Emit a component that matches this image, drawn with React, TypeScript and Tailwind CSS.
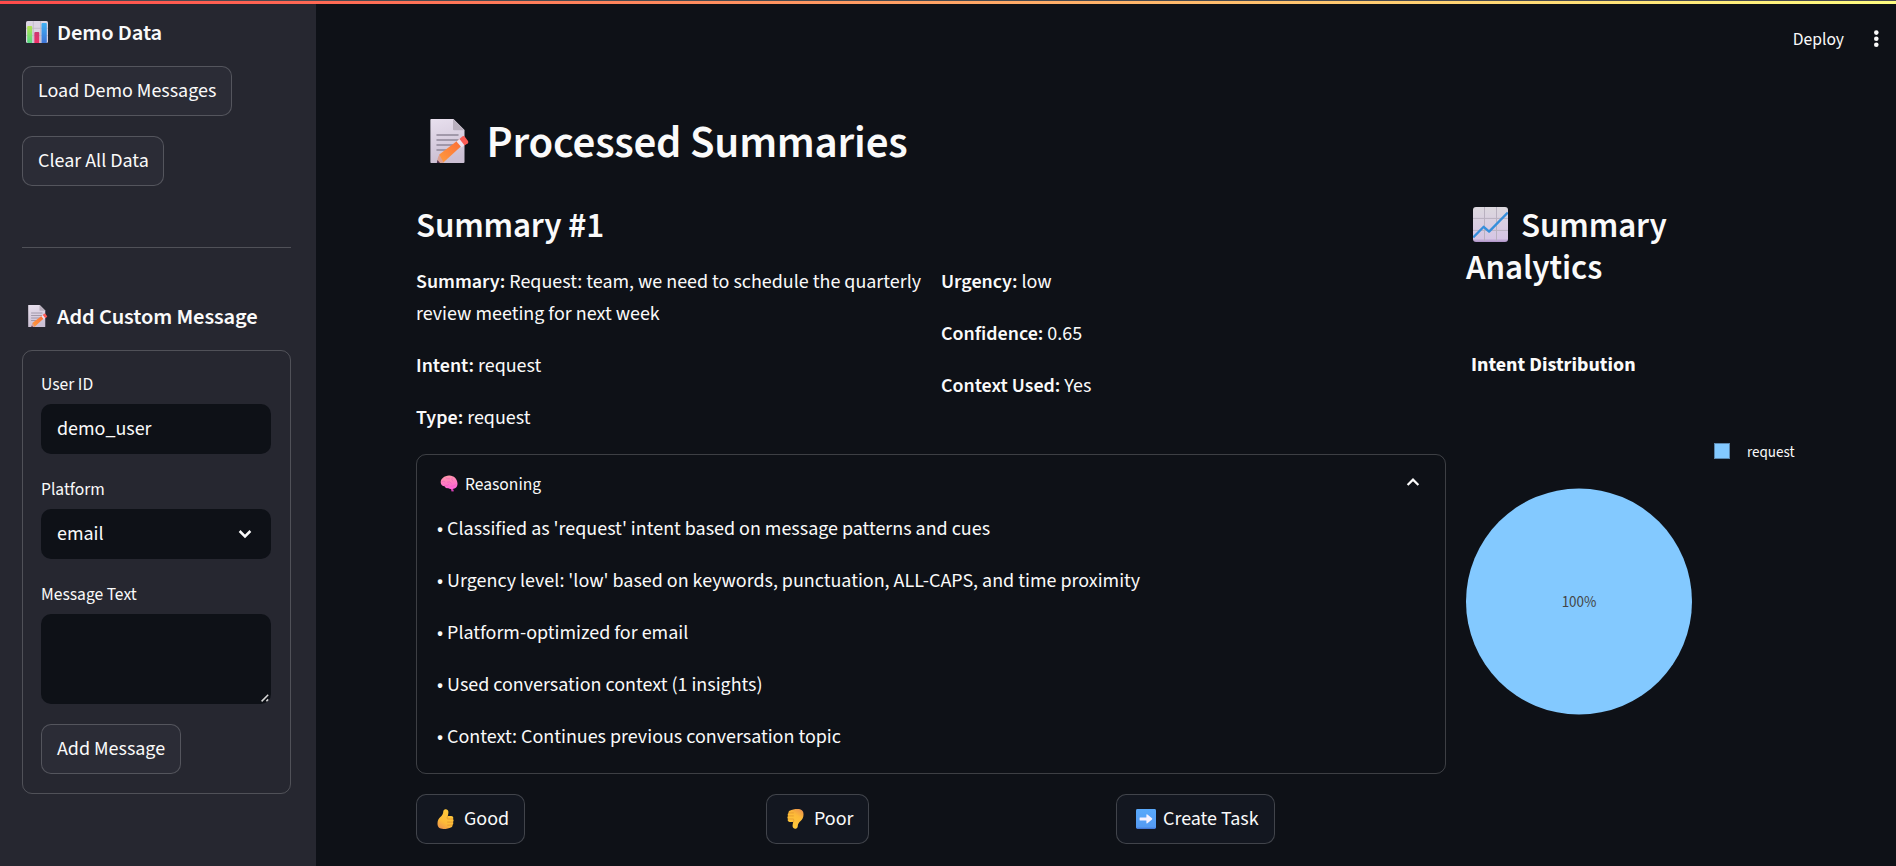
import type { ReactNode } from "react";

function MemoIcon({ className }: { className: string }) {
  return (
    <svg viewBox="0 0 40 44" className={className}>
      <defs>
        <linearGradient id="memoPaper" x1="0" y1="0" x2="0.2" y2="1">
          <stop offset="0" stopColor="#e8e0ee" />
          <stop offset="1" stopColor="#cbbfd3" />
        </linearGradient>
        <linearGradient id="memoPencil" x1="1" y1="0" x2="0" y2="1">
          <stop offset="0" stopColor="#fb6a36" />
          <stop offset="1" stopColor="#ff9f3f" />
        </linearGradient>
      </defs>
      <path d="M1 0H23.5L34.5 11V43Q34.5 44 33.5 44H1Q0.4 44 0.4 43V1Q0.4 0 1 0Z" fill="url(#memoPaper)" />
      <path d="M23 0L34.5 11.3H24Q23 11.3 23 10.3Z" fill="#b9b0be" />
      <path d="M7 16H28M7 21H28M7 26H23M7 31H17" stroke="#8f8798" strokeWidth="1.5" strokeLinecap="round" />
      <path d="M9.3 35.5L29 20.5L33 25.5L13.4 43.5L7.5 44Z" fill="url(#memoPencil)" />
      <path d="M9.3 35.5L13.6 43.4L12.5 44H7L7.7 39.5Z" fill="#dba093" />
      <path d="M7.5 41L10 44H6.8Z" fill="#50304f" />
      <path d="M26.5 22.5L30 19.7L35 25.4L31.6 28.4Z" fill="#ebe3f2" />
      <path d="M29.5 20L32.2 17.5Q33.7 16.4 35 18L38 22Q38.8 23.2 37.8 24.2L34.6 26.5Z" fill="#fb5c55" />
    </svg>
  );
}

function BarChartIcon({ className }: { className: string }) {
  return (
    <svg viewBox="0 0 22 22" className={className}>
      <defs>
        <linearGradient id="barGreen" x1="0" y1="0" x2="0" y2="1">
          <stop offset="0" stopColor="#b3e34f" />
          <stop offset="1" stopColor="#54d983" />
        </linearGradient>
        <linearGradient id="barRed" x1="0" y1="0" x2="0" y2="1">
          <stop offset="0" stopColor="#c93a73" />
          <stop offset="1" stopColor="#f02f66" />
        </linearGradient>
        <linearGradient id="barBlue" x1="0" y1="0" x2="0" y2="1">
          <stop offset="0" stopColor="#3fb0f3" />
          <stop offset="1" stopColor="#3f75d6" />
        </linearGradient>
      </defs>
      <rect width="22" height="22" rx="1.6" fill="#dcd4e2" />
      <path d="M7.3 0V22M14.6 0V22M0 7.3H22M0 14.6H22" stroke="#bfb7c6" strokeWidth="0.8" />
      <path d="M1.2 22V6Q1.2 5 2.2 5H5.2Q6.2 5 6.2 6V22H2.2Q1.2 22 1.2 21Z" fill="url(#barGreen)" />
      <path d="M8.3 22V12Q8.3 11 9.3 11H12.3Q13.3 11 13.3 12V22Z" fill="url(#barRed)" />
      <path d="M15.5 22V3Q15.5 2 16.5 2H19.8Q20.8 2 20.8 3V22Z" fill="url(#barBlue)" />
    </svg>
  );
}

function TrendIcon({ className }: { className: string }) {
  return (
    <svg viewBox="0 0 35 35" className={className}>
      <defs>
        <linearGradient id="trendPaper" x1="0" y1="0" x2="0" y2="1">
          <stop offset="0" stopColor="#dcd8de" />
          <stop offset="0.9" stopColor="#d6c6e4" />
          <stop offset="1" stopColor="#ac90c6" />
        </linearGradient>
      </defs>
      <rect width="35" height="35" rx="3" fill="url(#trendPaper)" />
      <path d="M11.5 0V34M23.5 0V34M0 11.4H35M0 23.4H35" stroke="#b9b1c0" strokeWidth="1" />
      <path d="M0.2 30.5L10.7 19.8L16.1 24.6L34.8 5.6" fill="none" stroke="#368fdb" strokeWidth="2.3" strokeLinejoin="round" />
    </svg>
  );
}

function BrainIcon({ className }: { className: string }) {
  return (
    <svg viewBox="0 0 18 17" className={className}>
      <defs>
        <linearGradient id="brainPink" x1="0.3" y1="0" x2="0.5" y2="1">
          <stop offset="0" stopColor="#ff9aa8" />
          <stop offset="1" stopColor="#ff63d8" />
        </linearGradient>
      </defs>
      <path d="M12.2 12L14 16.2L11.6 16.6L10.5 13Z" fill="#d63fb5" />
      <path d="M9 .6C13.5 .3 17.4 4 17.5 8.6C17.5 12 15.5 14 12.5 14C10.5 14.2 9 13.6 8 12.9C6.5 13.6 5 12.6 4.6 11.2C2.5 11.2 .8 10 .7 7.6C.6 3.8 4.3 .9 9 .6Z" fill="url(#brainPink)" />
      <path d="M2 6.5Q4 5.5 5 6.8M6 2.8Q7.2 4.2 9.5 3.8M12 3Q11 5 12.8 6.2M7.5 7Q10 6 11.5 8.5M4.8 10.6Q7.5 11.2 9 9.2M11 11.3Q13.5 11.5 15.8 9.8" fill="none" stroke="#e860bc" strokeWidth="0.6" strokeLinecap="round" />
    </svg>
  );
}

function ThumbIcon({ className }: { className: string }) {
  return (
    <svg viewBox="0 0 17 20" className={className}>
      <defs>
        <linearGradient id="thumbGold" x1="0.7" y1="0" x2="0.2" y2="1">
          <stop offset="0" stopColor="#ffcb3b" />
          <stop offset="0.65" stopColor="#fdba38" />
          <stop offset="1" stopColor="#ec944c" />
        </linearGradient>
      </defs>
      <path d="M7.6 .5C9.6 -.3 11.2 .9 11.4 2.8C11.5 4.5 11 6 10.8 7H14.2C16 7 16.8 8.6 16 10C16.8 11 16.8 12.2 16 13.1C16.6 14.2 16.3 15.4 15.4 16C15.7 17.2 15 18.2 13.8 18.4C12.6 19.3 9.4 19.9 6.4 19.9C2.8 19.9 .5 18.4 .5 14.8C.4 11.5 1.5 9.5 3.4 7.9C5 6.5 6 5.1 6.2 3.2C6.3 1.9 6.6 .9 7.6 .5Z" fill="url(#thumbGold)" />
      <path d="M10.8 10H15.6M10.6 13.1H15.6M10.6 16.1H15M10.6 7.3Q9.8 8.4 10.2 9.4" fill="none" stroke="#de8f2e" strokeWidth="0.7" strokeLinecap="round" />
    </svg>
  );
}

function ArrowBadgeIcon({ className }: { className: string }) {
  return (
    <svg viewBox="0 0 20 20" className={className}>
      <defs>
        <linearGradient id="arrowBlue" x1="0" y1="0" x2="0" y2="1">
          <stop offset="0" stopColor="#59a9fb" />
          <stop offset="0.9" stopColor="#559bf2" />
          <stop offset="1" stopColor="#3f6fd0" />
        </linearGradient>
      </defs>
      <rect width="20" height="20" rx="1.4" fill="url(#arrowBlue)" />
      <path d="M4 8.4H10.4V6Q10.4 4.8 11.4 5.6L16 9.3Q16.6 9.9 16 10.5L11.4 14.2Q10.4 15 10.4 13.8V11.4H4Q3.6 11.4 3.6 11V8.8Q3.6 8.4 4 8.4Z" fill="#f7f2ff" />
    </svg>
  );
}

function Button({ children, className }: { children: ReactNode; className: string }) {
  return (
    <button className={`flex h-[50px] items-center rounded-[10px] border border-[#fafafa]/20 text-xl leading-8 ${className}`}>
      {children}
    </button>
  );
}

function Label({ children }: { children: ReactNode }) {
  return <label className="block h-[34px] pt-px text-[17.5px] leading-[28px]">{children}</label>;
}

function Field({ name, value }: { name: string; value: string }) {
  return (
    <p>
      <strong className="font-semibold">{name}:</strong>
      {` ${value}`}
    </p>
  );
}

const reasons = [
  "• Classified as 'request' intent based on message patterns and cues",
  "• Urgency level: 'low' based on keywords, punctuation, ALL-CAPS, and time proximity",
  "• Platform-optimized for email",
  "• Used conversation context (1 insights)",
  "• Context: Continues previous conversation topic",
];

function Sidebar() {
  return (
    <aside className="h-full w-[316px] shrink-0 bg-[#262730] pr-[25px] pl-[22px]">
      <h3 className="flex h-[62px] items-start pt-[15px] text-[22.5px] leading-[27px] font-semibold tracking-[-0.1px]">
        <BarChartIcon className="mt-[2px] mr-[9px] ml-1 size-[22px]" />
        <span className="pt-px">Demo Data</span>
      </h3>
      <div className="flex flex-col items-start gap-5">
        <Button className="bg-[#2b2c36] px-[15px]">Load Demo Messages</Button>
        <Button className="bg-[#2b2c36] pr-[14px] pl-[15px]">Clear All Data</Button>
      </div>
      <hr className="mt-[61px] border-[#fafafa]/20" />
      <h3 className="mt-[50px] flex h-[52px] items-start text-[22.5px] leading-[27px] font-semibold tracking-[-0.1px]">
        <MemoIcon className="mt-[7px] mr-[9px] ml-[6px] h-[22px] w-5" />
        <span className="mt-[6px]">Add Custom Message</span>
      </h3>
      <form className="flex h-[444px] flex-col items-start rounded-[10px] border border-[#fafafa]/20 pt-[19px] pr-[19px] pl-[18px]">
        <Label>User ID</Label>
        <input
          readOnly
          value="demo_user"
          className="h-[50px] w-full rounded-[10px] bg-[#0e1117] px-4 text-xl outline-none"
        />
        <div className="h-[21px]" />
        <Label>Platform</Label>
        <div className="flex h-[50px] w-full items-center justify-between rounded-[10px] bg-[#0e1117] pr-[19px] pl-4 text-xl">
          email
          <svg viewBox="0 0 14 10" className="h-[10px] w-[14px]">
            <path d="M1.6 2L7 7.4L12.4 2" fill="none" stroke="#fafafa" strokeWidth="2.5" />
          </svg>
        </div>
        <div className="h-[21px]" />
        <Label>Message Text</Label>
        <div className="flex h-[90px] w-full items-end justify-end rounded-[10px] bg-[#0e1117] p-[2px]">
          <svg viewBox="0 0 8 8" className="size-2">
            <path d="M0.6 7.4L7.2 0.8M5.4 7.2L7.2 5.4" fill="none" stroke="#d8d8d8" strokeWidth="1.5" />
          </svg>
        </div>
        <Button className="mt-5 bg-[#2b2c36] px-[15px]">Add Message</Button>
      </form>
    </aside>
  );
}

function Summary() {
  return (
    <section className="w-[1030px]">
      <h3 className="h-[61px] text-[35px] leading-[42px] font-semibold tracking-[-0.15px]">Summary #1</h3>
      <div className="flex h-[188px] gap-[15px] text-xl leading-8">
        <div className="flex w-[510px] flex-col gap-5">
          <Field name="Summary" value="Request: team, we need to schedule the quarterly review meeting for next week" />
          <Field name="Intent" value="request" />
          <Field name="Type" value="request" />
        </div>
        <div className="flex w-[505px] flex-col gap-5">
          <Field name="Urgency" value="low" />
          <Field name="Confidence" value="0.65" />
          <Field name="Context Used" value="Yes" />
        </div>
      </div>
      <div className="h-[320px] rounded-[10px] border border-[#fafafa]/20 px-5">
        <div className="flex h-[58px] items-center pr-[5px] text-[17.5px] leading-7">
          <BrainIcon className="mr-[7px] mb-px ml-[3px] h-[17px] w-[18px]" />
          <span className="grow pt-px">Reasoning</span>
          <svg viewBox="0 0 14 10" className="mb-[4px] h-[10px] w-[14px]">
            <path d="M1.6 8L7 2.6L12.4 8" fill="none" stroke="#fafafa" strokeWidth="2.2" />
          </svg>
        </div>
        <div className="flex flex-col gap-5 text-xl leading-8">
          {reasons.map((reason) => (
            <p key={reason}>{reason}</p>
          ))}
        </div>
      </div>
      <div className="mt-5 grid grid-cols-3 gap-5">
        <div className="flex">
          <Button className="bg-[#131720] pr-[15px] pl-5">
            <ThumbIcon className="mr-[10px] h-5 w-[17px]" />
            Good
          </Button>
        </div>
        <div className="flex">
          <Button className="bg-[#131720] pr-[15px] pl-5">
            <ThumbIcon className="mr-[10px] h-5 w-[17px] rotate-180" />
            Poor
          </Button>
        </div>
        <div className="flex">
          <Button className="bg-[#131720] pr-[15px] pl-[19px]">
            <ArrowBadgeIcon className="mr-[7px] size-5" />
            Create Task
          </Button>
        </div>
      </div>
    </section>
  );
}

function Analytics() {
  return (
    <section className="w-[330px]">
      <h3 className="text-[35px] leading-[42px] font-semibold tracking-[-0.1px]">
        <span className="flex">
          <TrendIcon className="mt-[2px] mr-[13px] ml-[7px] size-[35px]" />
          Summary
        </span>
        Analytics
      </h3>
      <svg viewBox="0 0 330 440" className="mt-[51px] h-[440px] w-[330px]">
        <text x="5" y="31" fontSize="20" fontWeight="700" fill="#fafafa">
          Intent Distribution
        </text>
        <rect x="248.5" y="103.5" width="15" height="15" fill="#83c9ff" stroke="#5a86ad" />
        <text x="281" y="117" fontSize="15" fill="#fafafa">
          request
        </text>
        <circle cx="113" cy="261.5" r="113" fill="#83c9ff" />
        <text x="113" y="267" fontSize="15" textAnchor="middle" fill="#444444">
          100%
        </text>
      </svg>
    </section>
  );
}

export default function App() {
  return (
    <div className="flex h-[866px] w-[1896px] flex-col overflow-hidden bg-[#0e1117] font-['Source_Sans_Pro','Source_Sans_3','Noto_Sans_CJK_SC',sans-serif] text-[#fafafa]">
      <div className="h-px shrink-0 bg-[#4a4b50]" />
      <div className="h-[3px] shrink-0 bg-linear-to-r/srgb from-[#ff4b4b] to-[#fffd80]" />
      <div className="flex grow">
        <Sidebar />
        <div className="flex grow flex-col">
          <header className="flex h-[70px] items-center justify-end gap-[29px] pr-[17px] text-[17.5px]">
            <span className="pt-[2px]">Deploy</span>
            <svg viewBox="0 0 6 18" className="h-[18px] w-[6px]">
              <circle cx="3.3" cy="2.6" r="2.3" fill="#fafafa" />
              <circle cx="3.3" cy="8.7" r="2.3" fill="#fafafa" />
              <circle cx="3.3" cy="14.8" r="2.3" fill="#fafafa" />
            </svg>
          </header>
          <main className="pt-[42px] pl-[100px]">
            <h2 className="flex h-[89px] text-[45px] leading-[54px] font-semibold tracking-[-0.22px]">
              <MemoIcon className="mt-[3px] mr-[17px] ml-[13.5px] h-11 w-10" />
              Processed Summaries
            </h2>
            <div className="flex gap-5">
              <Summary />
              <Analytics />
            </div>
          </main>
        </div>
      </div>
    </div>
  );
}
